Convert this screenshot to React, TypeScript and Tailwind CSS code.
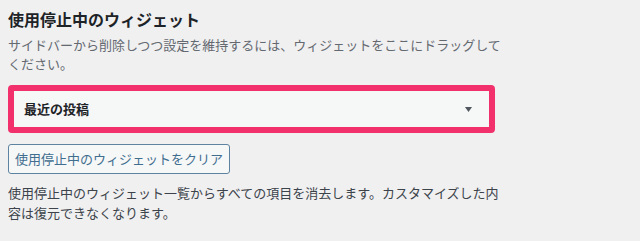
export default function App() {
  return (
    <div
      className="w-[640px] h-[241px] bg-[#f0f0f1] pl-2 pt-2 overflow-hidden"
      style={{ fontFamily: '"Noto Sans CJK JP", "Liberation Sans", sans-serif' }}
    >
      <h3 className="text-[16px] leading-[22px] font-semibold text-[#1d2327]">
        使用停止中のウィジェット
      </h3>
      <p className="mt-[5px] w-[500px] text-[13px] leading-[19px] text-[#646970]">
        サイドバーから削除しつつ設定を維持するには、ウィジェットをここにドラッグしてください。
      </p>
      <div className="mt-[12px] w-[487px] h-[48px] rounded-[4px] border-[6px] border-[#f2306c] bg-[#f6f7f7] flex items-center justify-between pl-[10px] pr-[17px]">
        <span className="text-[13px] font-bold text-[#1d2327]">最近の投稿</span>
        <svg width="7" height="5" viewBox="0 0 7 5" className="fill-[#50575e]">
          <path d="M0 0h7L3.5 5z" />
        </svg>
      </div>
      <button className="mt-[11px] h-[30px] w-[222px] rounded-[3px] border border-[#5e83a0] bg-[#f6f7f7] text-[13px] text-[#3f6e8f] flex items-center justify-center">
        使用停止中のウィジェットをクリア
      </button>
      <p className="mt-[9px] w-[500px] text-[13px] leading-[20px] text-[#3c434a]">
        使用停止中のウィジェット一覧からすべての項目を消去します。カスタマイズした内容は復元できなくなります。
      </p>
    </div>
  );
}
